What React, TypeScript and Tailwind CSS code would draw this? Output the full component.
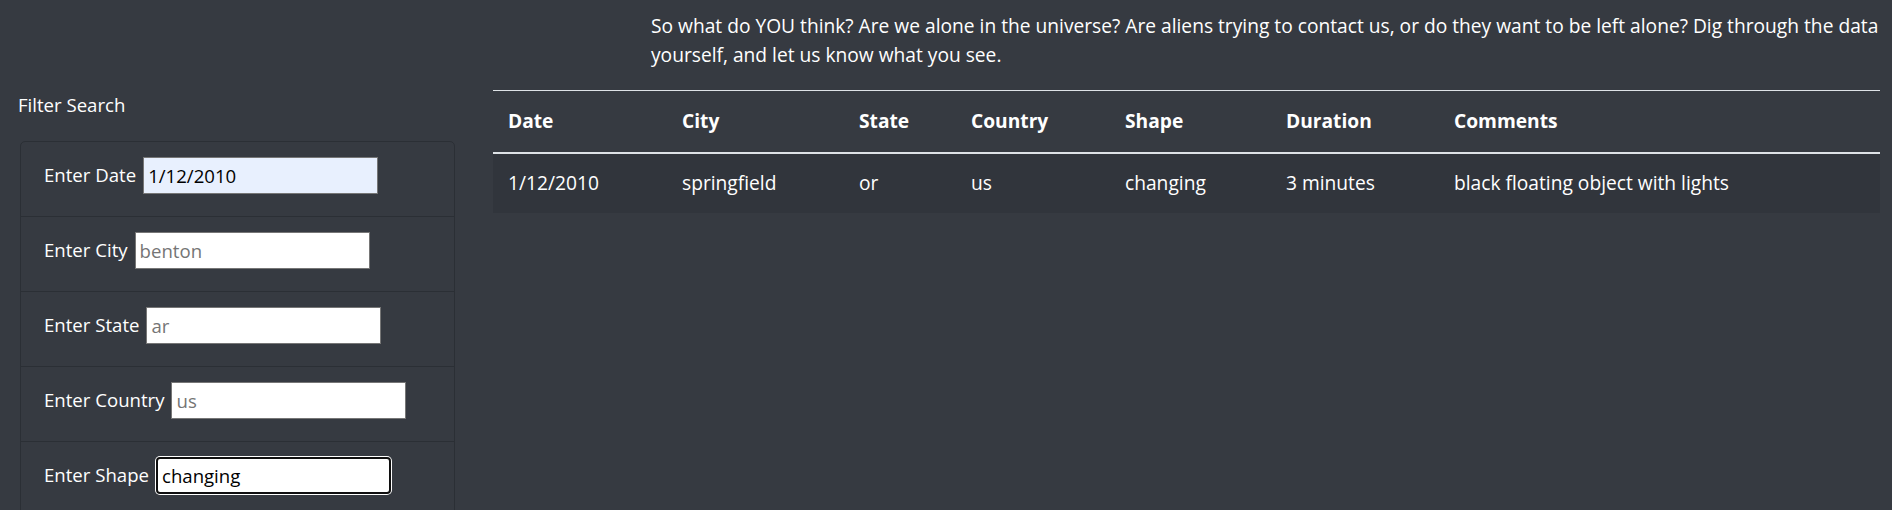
const font = { fontFamily: '"Open Sans", "Noto Sans", sans-serif' };

type Filter = {
  label: string;
  value?: string;
  placeholder?: string;
  autofill?: boolean;
  focused?: boolean;
};

const filters: Filter[] = [
  { label: "Enter Date", value: "1/12/2010", autofill: true },
  { label: "Enter City", placeholder: "benton" },
  { label: "Enter State", placeholder: "ar" },
  { label: "Enter Country", placeholder: "us" },
  { label: "Enter Shape", value: "changing", focused: true },
];

const columns = ["Date", "City", "State", "Country", "Shape", "Duration", "Comments"];

const rows = [
  ["1/12/2010", "springfield", "or", "us", "changing", "3 minutes", "black floating object with lights"],
];

function FilterRow({ f, first }: { f: Filter; first: boolean }) {
  let inputCls =
    "w-[235px] h-[37px] px-[4px] text-[18.6px] text-black outline-none placeholder:text-[#757575] ";
  if (f.focused) {
    inputCls += "bg-white border-2 border-[#101010] rounded-[4px] shadow-[0_0_0_1px_#ffffff]";
  } else if (f.autofill) {
    inputCls += "bg-[#e8f0fe] border border-[#767676]";
  } else {
    inputCls += "bg-white border border-[#767676]";
  }
  return (
    <div className={`pt-[15px] pl-[23px] ${first ? "h-[74px]" : "h-[75px] border-t border-[#2b2f35]"}`}>
      <div className="flex items-center gap-[7px] h-[37px]">
        <label className="text-[18.6px] text-white whitespace-nowrap">{f.label}</label>
        <input
          type="text"
          readOnly
          className={inputCls}
          style={font}
          value={f.value ?? ""}
          placeholder={f.placeholder}
        />
      </div>
    </div>
  );
}

export default function App() {
  return (
    <div className="h-[510px] w-full overflow-hidden bg-[#363a41] text-white flex" style={font}>
      {/* filter panel */}
      <div className="w-[493px] shrink-0 pt-[91px]">
        <div className="ml-[18px] text-[18.6px] leading-[28.8px]">Filter Search</div>
        <div className="ml-[20px] mt-[21px] w-[435px] border border-[#2b2f35] rounded-[5px]">
          {filters.map((f, i) => (
            <FilterRow key={f.label} f={f} first={i === 0} />
          ))}
        </div>
      </div>

      {/* results */}
      <div className="w-[1387px] shrink-0">
        <p className="pl-[158px] pt-[11px] text-[19.2px] leading-[29px]">
          So what do YOU think? Are we alone in the universe? Are aliens trying to contact us, or do they want to be left alone? Dig through the data
          <br />
          yourself, and let us know what you see.
        </p>
        <div className="mt-[21px] border-t border-[#dee2e6] text-[19.2px] leading-[28.8px]">
          <div className="grid grid-cols-[174px_177px_112px_154px_161px_168px_441px] h-[62.5px] items-center border-b-[2.6px] border-[#dee2e6] font-bold">
            {columns.map((c) => (
              <div key={c} className="pl-[15px]">
                {c}
              </div>
            ))}
          </div>
          {rows.map((r, i) => (
            <div
              key={i}
              className="grid grid-cols-[174px_177px_112px_154px_161px_168px_441px] h-[59.6px] pt-[1px] items-center bg-[#31353c]"
            >
              {r.map((v, j) => (
                <div key={j} className="pl-[15px] whitespace-nowrap">
                  {v}
                </div>
              ))}
            </div>
          ))}
        </div>
      </div>
    </div>
  );
}
